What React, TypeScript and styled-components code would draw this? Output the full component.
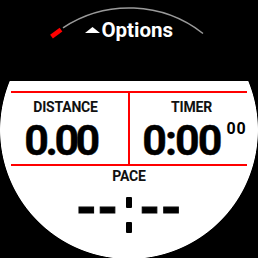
import React from "react";
import styled, { createGlobalStyle } from "styled-components";

const Global = createGlobalStyle`
  html, body { margin: 0; padding: 0; background: #fff; }
  body { font-family: Roboto, "Liberation Sans", sans-serif; }
`;

const Screen = styled.div`
  width: 258px;
  height: 258px;
  background: #000;
  overflow: hidden;
  display: flex;
  flex-direction: column;
`;

const Header = styled.header`
  position: relative;
  flex: none;
  height: 81px;
  box-sizing: border-box;
  padding-top: 20px;
  display: flex;
  justify-content: center;
  align-items: flex-start;
`;

const Bezel = styled.svg`
  position: absolute;
  left: 0;
  top: 0;
  width: 258px;
  height: 81px;
`;

const Title = styled.div`
  position: relative;
  display: flex;
  align-items: flex-end;
  gap: 1.5px;
  color: #fff;
  font: 700 20.5px/20px Roboto, "Liberation Sans", sans-serif;
`;

const Caret = styled.svg`
  width: 15px;
  height: 6px;
  margin-bottom: 7px;
`;

const Panel = styled.main`
  flex: 1;
  box-sizing: border-box;
  padding-top: 10px;
  display: flex;
  flex-direction: column;
  align-items: center;
  background: radial-gradient(circle at 129px 49px, #fff 128.5px, #000 129.3px);
`;

const Stats = styled.section`
  align-self: stretch;
  margin: 0 11px;
  display: grid;
  grid-template-columns: 1fr 2px 1fr;
  border-top: 2px solid #f00;
  border-bottom: 2px solid #f00;
`;

const Divider = styled.div`
  background: #f00;
`;

const Cell = styled.div`
  display: flex;
  flex-direction: column;
  align-items: center;
  padding: 7px 0 2.5px;
`;

const Label = styled.div<{ $shift?: number }>`
  font: 700 14px/14px Roboto, "Liberation Sans", sans-serif;
  color: #111;
  letter-spacing: -0.2px;
  transform: translateX(${(p) => p.$shift ?? 0}px);
`;

const ValueRow = styled.div<{ $shift?: number }>`
  display: flex;
  align-items: flex-start;
  margin-top: 4.5px;
  transform: translateX(${(p) => p.$shift ?? 0}px);
`;

const Big = styled.span<{ $spacing: number }>`
  font: 700 43px/43px Roboto, "Liberation Sans", sans-serif;
  color: #000;
  letter-spacing: ${(p) => p.$spacing}px;
  -webkit-text-stroke: 0.4px #000;
`;

const Sup = styled.span`
  font: 700 16px/16px Roboto, "Liberation Sans", sans-serif;
  color: #000;
  letter-spacing: 1px;
  margin-top: 2.8px;
  margin-left: 6px;
`;

const PaceLabel = styled(Label)`
  margin-top: 3.2px;
`;

const PaceRow = styled.div`
  display: flex;
  align-items: center;
  margin-top: 4.5px;
`;

const Dashes = styled.span`
  font: 700 53px/40px Roboto, "Liberation Sans", sans-serif;
  color: #000;
  letter-spacing: 0.5px;
  -webkit-text-stroke: 1px #000;
  margin-bottom: 15px;
`;

const Colon = styled.span`
  display: flex;
  flex-direction: column;
  gap: 14.3px;
  margin: 0 7px;
  &::before,
  &::after {
    content: "";
    width: 6.7px;
    height: 10.7px;
    border-radius: 1px;
    background: #000;
  }
`;

export default function App() {
  return (
    <>
      <Global />
      <Screen>
        <Header>
          <Bezel viewBox="0 0 258 81">
            <path
              d="M 63 27.8 A 120 120 0 0 1 203 33.5"
              fill="none"
              stroke="#9a9a9a"
              strokeWidth="1.5"
            />
            <line x1="51.5" y1="36.6" x2="61" y2="29.6" stroke="#f00" strokeWidth="4.6" />
          </Bezel>
          <Title>
            <Caret viewBox="0 0 15 6">
              <polygon points="0,6 7.5,0 15,6" fill="#fff" />
            </Caret>
            <span>Options</span>
          </Title>
        </Header>
        <Panel>
          <Stats>
            <Cell>
              <Label $shift={-4}>DISTANCE</Label>
              <ValueRow $shift={-9}>
                <Big $spacing={-3.5}>0.00</Big>
              </ValueRow>
            </Cell>
            <Divider />
            <Cell>
              <Label $shift={3}>TIMER</Label>
              <ValueRow $shift={6}>
                <Big $spacing={-2}>0:00</Big>
                <Sup>00</Sup>
              </ValueRow>
            </Cell>
          </Stats>
          <PaceLabel>PACE</PaceLabel>
          <PaceRow>
            <Dashes>--</Dashes>
            <Colon />
            <Dashes>--</Dashes>
          </PaceRow>
        </Panel>
      </Screen>
    </>
  );
}
